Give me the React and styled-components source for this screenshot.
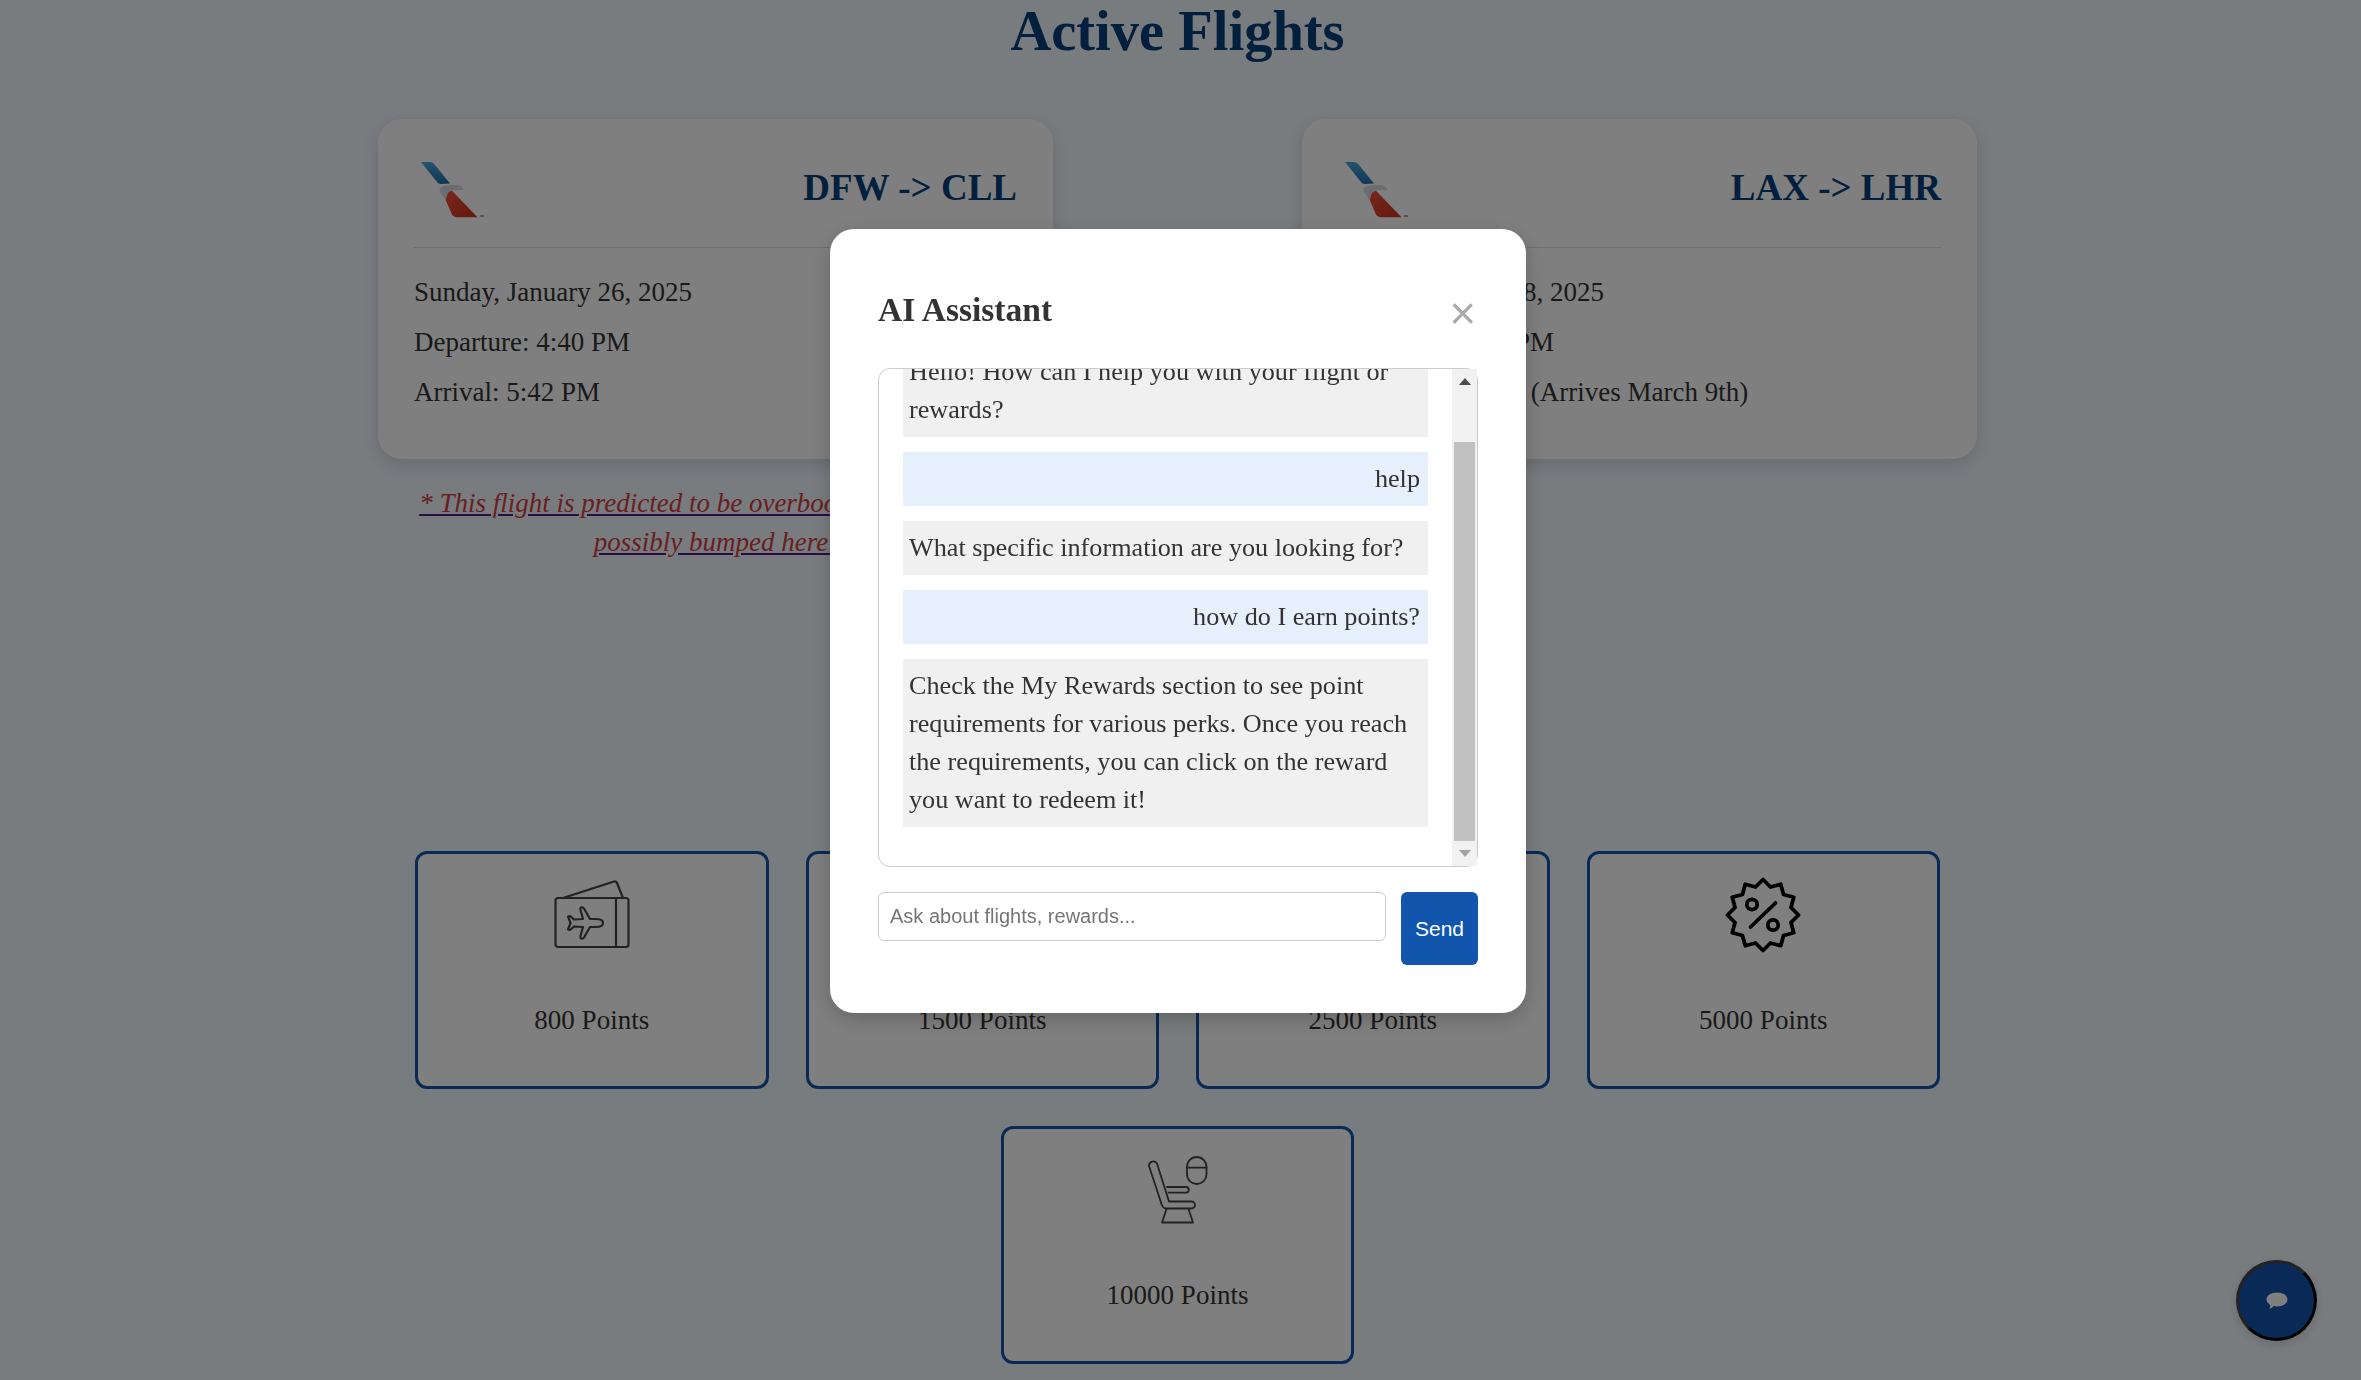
import { useLayoutEffect, useRef } from "react";
import styled, { createGlobalStyle } from "styled-components";
import { Gift, Luggage } from "lucide-react";

const SERIF = `"Liberation Serif", Georgia, serif`;
const SANS = `"Liberation Sans", Arial, sans-serif`;

const GlobalStyle = createGlobalStyle`
  html, body {
    margin: 0;
    height: 100%;
    overflow: hidden;
    background: #f0f8ff;
    color: #333;
    font-family: ${SERIF};
    font-size: 27px;
  }
`;

const Page = styled.div`
  box-sizing: border-box;
  height: 1380px;
  padding-right: 6px;
`;

const Title = styled.h1`
  margin: 0;
  font-size: 56.5px;
  line-height: 62px;
  font-weight: 700;
  text-align: center;
  color: #04407a;
`;

const Flights = styled.div`
  display: flex;
  justify-content: center;
  gap: 249px;
  margin-top: 57px;
`;

const FlightColumn = styled.div`
  width: 675px;
`;

const FlightCard = styled.div`
  box-sizing: border-box;
  height: 340px;
  padding: 36px 36px 0;
  background: #fff;
  border-radius: 24px;
  box-shadow: 0 6px 16px rgba(0, 0, 0, 0.14);
`;

const FlightHeader = styled.div`
  display: flex;
  justify-content: space-between;
  align-items: center;
  height: 68px;
  padding-bottom: 24px;
  margin-bottom: 25px;
  border-bottom: 1px solid #ddd;
`;

const Route = styled.div`
  margin-top: -3px;
  font-size: 37px;
  font-weight: 700;
  color: #04407a;
`;

const InfoLine = styled.p`
  margin: 12px 0;
  line-height: 38px;
  white-space: nowrap;
`;

const Note = styled.a`
  display: block;
  margin-top: 25px;
  padding: 0 36px;
  line-height: 38.5px;
  text-align: center;
  font-style: italic;
  color: #551a8b;
  text-decoration: underline;
`;

const NoteText = styled.span`
  color: #d33f3f;
`;

const Rewards = styled.div`
  display: flex;
  flex-wrap: wrap;
  justify-content: center;
  gap: 37px;
  width: 1525px;
  margin: 290px auto 0;
`;

const RewardCard = styled.div`
  box-sizing: border-box;
  width: 353.5px;
  height: 238px;
  padding-top: 24px;
  border: 3px solid #1255ad;
  border-radius: 12px;
  background: #fff;
  text-align: center;
`;

const IconSlot = styled.div`
  display: flex;
  justify-content: center;
  align-items: center;
  height: 74px;
`;

const Points = styled.div`
  margin-top: 49px;
  line-height: 38px;
`;

const ChatFab = styled.button`
  position: fixed;
  left: 2236px;
  top: 1260px;
  display: flex;
  justify-content: center;
  align-items: center;
  box-sizing: border-box;
  width: 81px;
  height: 81px;
  padding: 0;
  border: 3px outset #444;
  border-radius: 50%;
  background: #1255ad;
  box-shadow: 0 3px 10px rgba(0, 0, 0, 0.15);
`;

const Overlay = styled.div`
  position: fixed;
  inset: 0;
  display: flex;
  justify-content: center;
  align-items: flex-start;
  box-sizing: border-box;
  padding: 229px 5px 0 0;
  background: rgba(0, 0, 0, 0.5);
`;

const Modal = styled.div`
  box-sizing: border-box;
  width: 696px;
  height: 784px;
  padding: 48px;
  background: #fff;
  border-radius: 24px;
  box-shadow: 0 6px 20px rgba(0, 0, 0, 0.2);
`;

const ModalHeader = styled.div`
  display: flex;
  justify-content: space-between;
  align-items: center;
  height: 66px;
  margin-bottom: 25px;
`;

const ModalTitle = styled.h2`
  margin: 0;
  font-size: 33.5px;
  font-weight: 700;
  color: #333;
`;

const CloseButton = styled.button`
  padding: 0 2px 0 0;
  border: 0;
  background: none;
  font-family: ${SANS};
  font-size: 46px;
  line-height: 46px;
  color: #aaa;
  margin-top: 6px;
`;

const ChatFrame = styled.div`
  position: relative;
  height: 499px;
`;

const ChatLog = styled.div`
  box-sizing: border-box;
  height: 100%;
  padding: 38px 0 24px 24px;
  overflow: hidden;
  border: 1px solid #ccc;
  border-radius: 12px;
`;

const ScrollRail = styled.div`
  position: absolute;
  top: 1px;
  right: 1px;
  bottom: 1px;
  display: flex;
  flex-direction: column;
  width: 25px;
  background: #f1f1f1;
`;

const ScrollArrow = styled.div`
  display: flex;
  flex: none;
  justify-content: center;
  align-items: center;
  height: 25px;

  &::before {
    content: "";
    border-left: 6px solid transparent;
    border-right: 6px solid transparent;
    border-top: ${(p) => (p.$down ? "7px solid #a3a3a3" : "0")};
    border-bottom: ${(p) => (p.$down ? "0" : "7px solid #4d4d4d")};
  }
`;

const ScrollTrack = styled.div`
  display: flex;
  flex: 1;
  flex-direction: column;
  justify-content: flex-end;
  padding: 0 2px;
`;

const ScrollThumb = styled.div`
  height: 399px;
  background: #c1c1c1;
`;

const Bubble = styled.div`
  width: 525px;
  box-sizing: border-box;
  padding: 8px 8px 8px 6px;
  margin-bottom: 15px;
  font-size: 26.2px;
  line-height: 38px;
  color: #333;
  text-align: ${(p) => (p.$user ? "right" : "left")};
  background: ${(p) => (p.$user ? "#e6f0fc" : "#f0f0f0")};
`;

const InputRow = styled.div`
  display: flex;
  align-items: flex-start;
  gap: 15px;
  margin-top: 25px;
`;

const ChatInput = styled.input`
  box-sizing: border-box;
  width: 508px;
  height: 49px;
  padding: 0 11px;
  border: 1px solid #ccc;
  border-radius: 6px;
  font-family: ${SANS};
  font-size: 20px;
  outline: none;

  &::placeholder {
    color: #757575;
  }
`;

const SendButton = styled.button`
  width: 77px;
  height: 73px;
  border: 0;
  border-radius: 6px;
  background: #1255ad;
  color: #fff;
  font-family: ${SANS};
  font-size: 21px;
`;

const LINE = { fill: "none", stroke: "#444", strokeLinejoin: "round", strokeLinecap: "round" };

function TailLogo() {
  return (
    <svg width="72" height="68" viewBox="0 0 72 68">
      <defs>
        <linearGradient id="tailBlue" x1="0" y1="0" x2="0" y2="1">
          <stop offset="0" stopColor="#4aa8dc" />
          <stop offset="1" stopColor="#1f6fa8" />
        </linearGradient>
        <linearGradient id="tailRed" x1="0" y1="0" x2="1" y2="1">
          <stop offset="0" stopColor="#f2503a" />
          <stop offset="1" stopColor="#c9301f" />
        </linearGradient>
      </defs>
      <path d="M7 7 L16 7 Q19 7 21 10 L36 28.5 L27 29 Q24 29 23 27 Z" fill="url(#tailBlue)" />
      <path d="M25.5 33 Q30 30 36 30 L44 30 Q48 31 49.5 35 L40 35 Q33 36 32.5 41 L31.5 45 L26 37 Z" fill="#d5dade" />
      <path d="M32.7 41 Q34 36 38 35.7 L63.5 62.3 L43 62.3 Q39 62 37.7 59 L31.7 45 Z" fill="url(#tailRed)" />
      <rect x="66" y="60" width="4" height="2" fill="#aaa" />
    </svg>
  );
}

function TicketIcon() {
  return (
    <svg width="76" height="70" viewBox="-1 0 76 70" {...LINE} strokeWidth="2.2">
      <path d="M8 18 L59 1.5 Q61 1 62 3 L68 18" />
      <rect x="0.5" y="18" width="73" height="49" rx="2.5" />
      <path d="M61 18 V67" />
      <path d="M48 43 C48 40.5 45 39 41 39 L35 39 L29 28.5 Q28 27 26 27.5 Q25 28 25.5 30 L28 39 L19 39.5 L15 36 L13 36.5 L15.5 43 L13 49.5 L15 50 L19 46.5 L28 47 L25.5 56 Q25 58 26 58.5 Q28 59 29 57.5 L35 47 L41 47 C45 47 48 45.5 48 43 Z" />
    </svg>
  );
}

function badgeOutline() {
  const pts = [];
  for (let i = 0; i < 24; i++) {
    const r = i % 2 === 0 ? 35.5 : 29;
    const a = (i * Math.PI) / 12;
    pts.push(`${(r * Math.sin(a)).toFixed(2)} ${(-r * Math.cos(a)).toFixed(2)}`);
  }
  return `M${pts.join(" L")} Z`;
}

function PercentBadge() {
  return (
    <svg width="76" height="76" viewBox="-38 -38 76 76" fill="none" stroke="#000" strokeWidth="3.8" strokeLinejoin="round" strokeLinecap="round">
      <path d={badgeOutline()} />
      <circle cx="-11" cy="-10.5" r="5.2" />
      <circle cx="10" cy="10" r="5.2" />
      <path d="M-12.5 12 L12.5 -12" />
    </svg>
  );
}

function SeatIcon() {
  return (
    <svg width="60" height="68" viewBox="0 0 60 68" {...LINE} strokeWidth="1.8">
      <path d="M1 10 L13.5 48 Q15 52.5 18 52.5 L43.5 52.5 A3.5 3.5 0 0 0 43.5 45.5 L21 45.5 L9 7.5 A4.3 4.3 0 0 0 1 10 Z" />
      <path d="M19 31 H38 A2.8 2.8 0 0 1 38 36.6 H20.5" />
      <path d="M18.5 53 L14 66.5 H45 L40.5 53" />
      <rect x="39" y="1" width="19.5" height="27" rx="9.7" />
      <path d="M39 11.7 H58.5" />
    </svg>
  );
}

function ChatGlyph() {
  return (
    <svg width="22" height="18" viewBox="0 0 22 18">
      <path d="M11 0.5 C17 0.5 21.5 3.5 21.5 7.5 C21.5 11.5 17 14.5 11 14.5 C9.8 14.5 8.7 14.4 7.7 14.1 C6.5 15.6 4.8 16.8 3.4 17 C4 15.8 4.3 14.3 4.2 12.9 C1.9 11.6 0.5 9.7 0.5 7.5 C0.5 3.5 5 0.5 11 0.5 Z" fill="#fff" />
    </svg>
  );
}

const FLIGHTS = [
  {
    route: "DFW -> CLL",
    lines: ["Sunday, January 26, 2025", "Departure: 4:40 PM", "Arrival: 5:42 PM"],
    note: true,
  },
  {
    route: "LAX -> LHR",
    lines: ["Saturday, March 8, 2025", "Departure: 7:10 PM", "Arrival: 1:30 PM (Arrives March 9th)"],
  },
];

const REWARDS = [
  { points: 800, icon: <TicketIcon /> },
  { points: 1500, icon: <Luggage size={72} strokeWidth={1} color="#444" /> },
  { points: 2500, icon: <Gift size={72} strokeWidth={1} color="#444" /> },
  { points: 5000, icon: <PercentBadge /> },
  { points: 10000, icon: <SeatIcon /> },
];

const MESSAGES = [
  { text: "Hello! How can I help you with your flight or rewards?" },
  { text: "help", user: true },
  { text: "What specific information are you looking for?" },
  { text: "how do I earn points?", user: true },
  {
    text: "Check the My Rewards section to see point requirements for various perks. Once you reach the requirements, you can click on the reward you want to redeem it!",
  },
];

export default function App() {
  const logRef = useRef(null);

  useLayoutEffect(() => {
    logRef.current.scrollTop = logRef.current.scrollHeight;
  }, []);

  return (
    <>
      <GlobalStyle />
      <Page>
        <Title>Active Flights</Title>
        <Flights>
          {FLIGHTS.map((f) => (
            <FlightColumn key={f.route}>
              <FlightCard>
                <FlightHeader>
                  <TailLogo />
                  <Route>{f.route}</Route>
                </FlightHeader>
                {f.lines.map((line) => (
                  <InfoLine key={line}>{line}</InfoLine>
                ))}
              </FlightCard>
              {f.note && (
                <Note href="#bumped">
                  <NoteText>* This flight is predicted to be overbooked. You may be possibly bumped here!</NoteText>
                </Note>
              )}
            </FlightColumn>
          ))}
        </Flights>
        <Rewards>
          {REWARDS.map((r) => (
            <RewardCard key={r.points}>
              <IconSlot>{r.icon}</IconSlot>
              <Points>{r.points} Points</Points>
            </RewardCard>
          ))}
        </Rewards>
        <ChatFab aria-label="Open chat">
          <ChatGlyph />
        </ChatFab>
      </Page>
      <Overlay>
        <Modal>
          <ModalHeader>
            <ModalTitle>AI Assistant</ModalTitle>
            <CloseButton aria-label="Close">×</CloseButton>
          </ModalHeader>
          <ChatFrame>
            <ChatLog ref={logRef}>
              {MESSAGES.map((m) => (
                <Bubble key={m.text} $user={m.user}>
                  {m.text}
                </Bubble>
              ))}
            </ChatLog>
            <ScrollRail aria-hidden="true">
              <ScrollArrow />
              <ScrollTrack>
                <ScrollThumb />
              </ScrollTrack>
              <ScrollArrow $down />
            </ScrollRail>
          </ChatFrame>
          <InputRow>
            <ChatInput placeholder="Ask about flights, rewards..." />
            <SendButton>Send</SendButton>
          </InputRow>
        </Modal>
      </Overlay>
    </>
  );
}
